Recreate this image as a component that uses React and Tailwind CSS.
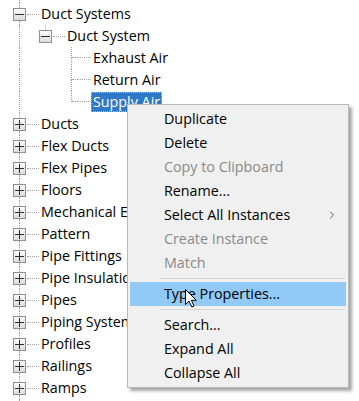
import { ChevronRight } from "lucide-react"

const font = { fontFamily: '"Open Sans", "Noto Sans", sans-serif' }
const dot = "border-dotted border-[#a0a0a0]"

// guides: lines for ancestor levels, up/down for own column
const tree = [
    { level: 0, label: "Duct Systems", box: "minus", up: true, down: true },
    { level: 1, label: "Duct System", box: "minus", guides: [true], up: true },
    { level: 2, label: "Exhaust Air", guides: [true, false], up: true, down: true },
    { level: 2, label: "Return Air", guides: [true, false], up: true, down: true },
    { level: 2, label: "Supply Air", guides: [true, false], up: true, selected: true },
    { level: 0, label: "Ducts", box: "plus", up: true, down: true },
    { level: 0, label: "Flex Ducts", box: "plus", up: true, down: true },
    { level: 0, label: "Flex Pipes", box: "plus", up: true, down: true },
    { level: 0, label: "Floors", box: "plus", up: true, down: true },
    { level: 0, label: "Mechanical Equipment", box: "plus", up: true, down: true },
    { level: 0, label: "Pattern", box: "plus", up: true, down: true },
    { level: 0, label: "Pipe Fittings", box: "plus", up: true, down: true },
    { level: 0, label: "Pipe Insulations", box: "plus", up: true, down: true },
    { level: 0, label: "Pipes", box: "plus", up: true, down: true },
    { level: 0, label: "Piping Systems", box: "plus", up: true, down: true },
    { level: 0, label: "Profiles", box: "plus", up: true, down: true },
    { level: 0, label: "Railings", box: "plus", up: true, down: true },
    { level: 0, label: "Ramps", box: "plus", up: true, down: true },
]

const menu = [
    { label: "Duplicate" },
    { label: "Delete" },
    { label: "Copy to Clipboard", disabled: true },
    { label: "Rename..." },
    { label: "Select All Instances", sub: true },
    { label: "Create Instance", disabled: true },
    { label: "Match", disabled: true },
    { sep: true },
    { label: "Type Properties...", hover: true },
    { sep: true },
    { label: "Search..." },
    { label: "Expand All" },
    { label: "Collapse All" },
]

const Box = ({ type }) => (
    <div className="w-[13px] h-[13px] shrink-0 border border-[#8e8f8f] bg-gradient-to-b from-[#fbfbfb] to-[#dcdcdc] grid place-items-center">
        <div className="col-start-1 row-start-1 w-[9px] h-[1px] bg-[#2b2b2b]" />
        {type === "plus" && <div className="col-start-1 row-start-1 w-[1px] h-[9px] bg-[#2b2b2b]" />}
    </div>
)

// one 26px indent column: 13px spacer + 13px line column
const Guide = ({ on }) => (
    <div className="w-[26px] h-full flex shrink-0">
        <div className="w-[13px]" />
        <div className="w-[13px] flex justify-center">
            {on && <div className={"h-full border-l " + dot} />}
        </div>
    </div>
)

const TreeRow = ({ item }) => (
    <div className="h-[22px] flex items-stretch">
        {(item.guides || []).map((g, i) => (
            <Guide key={i} on={g} />
        ))}
        <div className="w-[13px] shrink-0" />
        {item.box ? (
            <>
                <div className="w-[13px] flex flex-col items-center shrink-0">
                    <div className={"flex-1 " + (item.up ? "border-l " + dot : "")} />
                    <Box type={item.box} />
                    <div className={"flex-1 " + (item.down ? "border-l " + dot : "")} />
                </div>
                <div className="w-[13px] flex items-center shrink-0">
                    <div className={"w-[12px] ml-[1px] border-t " + dot} />
                </div>
            </>
        ) : (
            <>
                <div className="w-[13px] grid grid-cols-2 grid-rows-2 shrink-0">
                    <div className={"w-[7px] " + (item.up ? "border-r " + dot : "")} />
                    <div className={"border-b " + dot} />
                    <div className={"w-[7px] " + (item.down ? "border-r " + dot : "")} />
                    <div />
                </div>
                <div className="w-[13px] flex flex-col shrink-0">
                    <div className={"h-[11px] border-b " + dot} />
                </div>
            </>
        )}
        <div className="flex items-center">
            <span
                className={
                    "px-[2px] h-[20px] leading-[19px] text-[14.3px] whitespace-nowrap " +
                    (item.selected ? "bg-[#3079c8] text-white outline outline-1 outline-dotted outline-[#9fc1e6] -outline-offset-1" : "text-black")
                }
                style={font}
            >
                {item.label}
            </span>
        </div>
    </div>
)

const Cursor = () => (
    <svg width="13" height="19" viewBox="0 0 13 19" className="absolute left-[185px] top-[289px]">
        <path d="M0.5 0.5 L0.5 15.5 L4 12 L6.8 18 L9 17 L6.4 11.3 L11.3 11.3 Z" fill="white" stroke="black" strokeWidth="1" />
    </svg>
)

const App = () => {
    return (
        <div className="relative w-[359px] h-[401px] overflow-hidden bg-white">
            <div className="flex flex-col h-full">
                <div className="h-[3px] flex shrink-0">
                    <Guide on />
                </div>
                {tree.map((item, i) => (
                    <TreeRow key={i} item={item} />
                ))}
                <div className="flex-1 flex">
                    <Guide on />
                </div>
            </div>

            <div
                className="absolute left-[127px] top-[104px] w-[222px] border border-[#b9b9b9] bg-[#f0f0f0] p-[2px] shadow-[3px_3px_3px_rgba(0,0,0,0.35)]"
                style={font}
            >
                {menu.map((m, i) =>
                    m.sep ? (
                        <div key={i} className="h-[7px] flex items-center pl-[30px] pr-[1px]">
                            <div className="h-[1px] w-full bg-[#d7d7d7]" />
                        </div>
                    ) : (
                        <div
                            key={i}
                            className={
                                "h-[24px] flex items-center pl-[34px] pr-[8px] pb-[1px] text-[14.3px] " +
                                (m.hover ? "bg-[#91c9f7] " : "") +
                                (m.disabled ? "text-[#8a8a8a]" : "text-black")
                            }
                        >
                            <span className="flex-1 whitespace-nowrap">{m.label}</span>
                            {m.sub && <ChevronRight size={12} strokeWidth={1.5} className="text-[#333] mt-[1px]" />}
                        </div>
                    )
                )}
            </div>

            <Cursor />
        </div>
    )
}

export default App
